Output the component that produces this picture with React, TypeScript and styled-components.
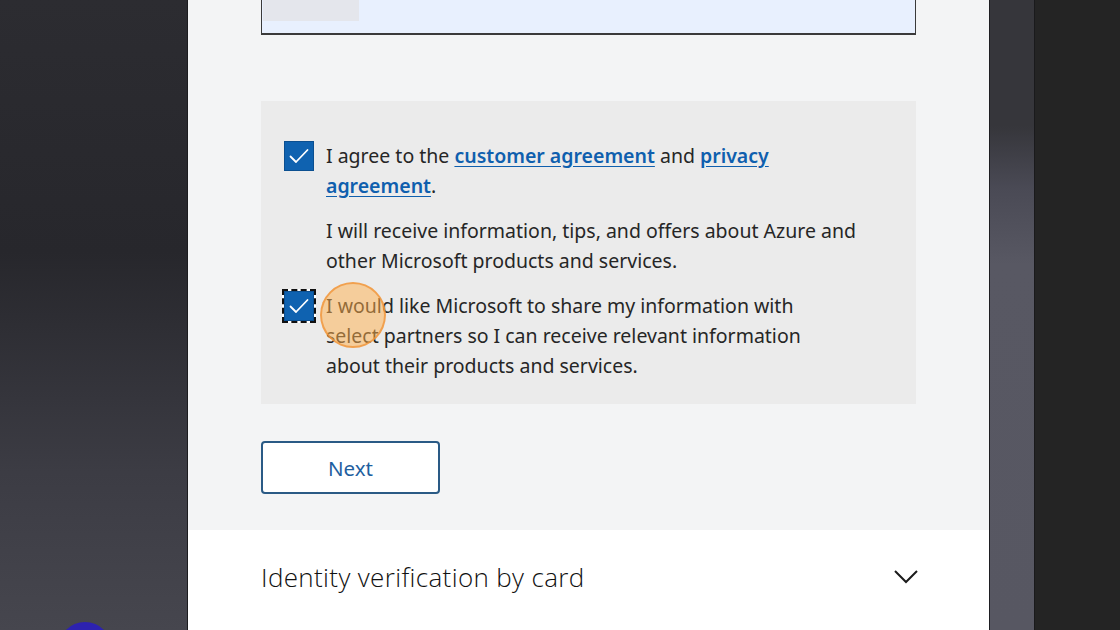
import React from 'react';
import styled, { createGlobalStyle } from 'styled-components';

const GlobalStyle = createGlobalStyle`
  html, body {
    margin: 0;
    padding: 0;
    width: 1120px;
    height: 630px;
    overflow: hidden;
    font-family: 'Noto Sans', 'Open Sans', sans-serif;
  }
`;

const Page = styled.div`
  position: relative;
  display: flex;
  width: 1120px;
  height: 630px;
  overflow: hidden;
`;

const LeftBackdrop = styled.div`
  width: 187px;
  flex-shrink: 0;
  background: linear-gradient(180deg, #2c2c31 0%, #27272c 40%, #3c3c44 75%, #46464e 100%);
`;

const Panel = styled.main`
  width: 801px;
  flex-shrink: 0;
  display: flex;
  flex-direction: column;
  border-left: 1px solid #1c1c1f;
  background: #ffffff;
`;

const RightStrip = styled.div`
  width: 44px;
  flex-shrink: 0;
  border-left: 1px solid #1e1e22;
  background: linear-gradient(180deg, #36363b 0%, #36363b 20%, #4a4a55 30%, #585863 42%, #575762 100%);
`;

const RightDark = styled.div`
  flex: 1;
  border-left: 1px solid #1a1a1c;
  background: #242424;
`;

const FormSection = styled.section`
  height: 530px;
  flex-shrink: 0;
  background: #f3f4f5;
  padding: 0 73px;
  box-sizing: border-box;
  display: flex;
  flex-direction: column;
  align-items: flex-start;
`;

const FilledInput = styled.div`
  width: 655px;
  height: 49px;
  margin-top: -14px;
  box-sizing: border-box;
  border: 1px solid #3a3a3a;
  border-bottom-width: 2px;
  background: #e8f0fe;
  padding: 3px 0 0 1px;
`;

const BlurredValue = styled.div`
  width: 96px;
  height: 21px;
  margin-top: 10px;
  background: #e4e6ec;
`;

const ConsentBox = styled.div`
  width: 655px;
  margin-top: 66px;
  box-sizing: border-box;
  background: #ebebeb;
  padding: 40px 23px 23px;
  display: flex;
  flex-direction: column;
  gap: 15px;
`;

const ConsentRow = styled.div`
  display: flex;
  align-items: flex-start;
  gap: 12px;
`;

const Checkbox = styled.span<{ focused?: boolean }>`
  position: relative;
  width: 30px;
  height: 30px;
  flex-shrink: 0;
  box-sizing: border-box;
  background: #0f62b0;
  border: 1px solid #0b4f90;
  display: flex;
  align-items: center;
  justify-content: center;
  outline: ${(p) => (p.focused ? '2px dashed #111' : 'none')};
  outline-offset: 0px;
  box-shadow: ${(p) => (p.focused ? '0 0 0 2px #ffffff' : 'none')};
`;

const ConsentText = styled.p<{ indent?: boolean }>`
  margin: 0;
  margin-left: ${(p) => (p.indent ? '42px' : '0')};
  font-size: 19.5px;
  line-height: 30px;
  color: #262626;
`;

const TermsLink = styled.a`
  color: #0f5fae;
  font-weight: 600;
  text-decoration: underline;
  text-underline-offset: 3px;
`;

const NextButton = styled.button`
  margin-top: 37px;
  width: 179px;
  height: 53px;
  background: #ffffff;
  border: 2px solid #2a5a85;
  border-radius: 4px;
  color: #1f5fa0;
  font-family: inherit;
  font-size: 20.5px;
  cursor: pointer;
`;

const AccordionHeader = styled.section`
  flex: 1;
  display: flex;
  align-items: center;
  justify-content: space-between;
  padding: 0 70px 0 73px;
  margin-top: -7px;
`;

const AccordionTitle = styled.h2`
  margin: 0;
  font-family: 'Open Sans', 'Noto Sans', sans-serif;
  font-weight: 300;
  font-size: 26px;
  letter-spacing: 0.35px;
  color: #111111;
`;

const CursorHalo = styled.div`
  position: absolute;
  left: 320px;
  top: 282px;
  width: 66px;
  height: 66px;
  border-radius: 50%;
  box-sizing: border-box;
  background: rgba(255, 175, 75, 0.5);
  border: 2px solid rgba(240, 150, 60, 0.8);
  pointer-events: none;
`;

const RecorderDot = styled.div`
  position: absolute;
  left: 58px;
  top: 622px;
  width: 54px;
  height: 54px;
  border-radius: 50%;
  background: #2d22b0;
`;

const CheckMark = () => (
  <svg width="20" height="16" viewBox="0 0 20 16" fill="none">
    <path d="M1.5 8.5L7 14L18.5 2" stroke="#ffffff" strokeWidth="1.8" strokeLinecap="round" strokeLinejoin="round" />
  </svg>
);

const Chevron = () => (
  <svg width="26" height="16" viewBox="0 0 26 16" fill="none">
    <path d="M2 2L13 13L24 2" stroke="#1b1b1b" strokeWidth="2" />
  </svg>
);

export default function App() {
  return (
    <Page>
      <GlobalStyle />
      <LeftBackdrop />
      <Panel>
        <FormSection>
          <FilledInput>
            <BlurredValue />
          </FilledInput>
          <ConsentBox>
            <ConsentRow>
              <Checkbox>
                <CheckMark />
              </Checkbox>
              <ConsentText>
                I agree to the <TermsLink>customer agreement</TermsLink> and <TermsLink>privacy</TermsLink>
                <br />
                <TermsLink>agreement</TermsLink>.
              </ConsentText>
            </ConsentRow>
            <ConsentText indent>
              I will receive information, tips, and offers about Azure and
              <br />
              other Microsoft products and services.
            </ConsentText>
            <ConsentRow>
              <Checkbox focused>
                <CheckMark />
              </Checkbox>
              <ConsentText>
                I would like Microsoft to share my information with
                <br />
                select partners so I can receive relevant information
                <br />
                about their products and services.
              </ConsentText>
            </ConsentRow>
          </ConsentBox>
          <NextButton>Next</NextButton>
        </FormSection>
        <AccordionHeader>
          <AccordionTitle>Identity verification by card</AccordionTitle>
          <Chevron />
        </AccordionHeader>
      </Panel>
      <RightStrip />
      <RightDark />
      <CursorHalo />
      <RecorderDot />
    </Page>
  );
}
